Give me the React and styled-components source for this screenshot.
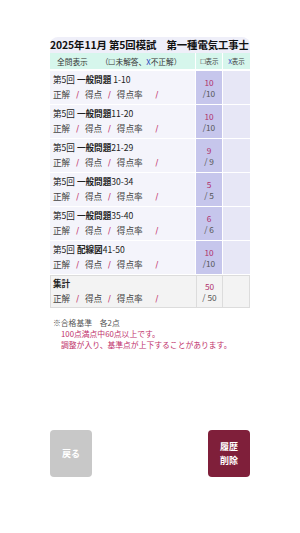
import React from "react";
import styled, { createGlobalStyle } from "styled-components";

const rows = [
    { cat: "一般問題", range: " 1-10", score: 10, max: 10 },
    { cat: "一般問題", range: "11-20", score: 10, max: 10 },
    { cat: "一般問題", range: "21-29", score: 9, max: 9 },
    { cat: "一般問題", range: "30-34", score: 5, max: 5 },
    { cat: "一般問題", range: "35-40", score: 6, max: 6 },
    { cat: "配線図", range: "41-50", score: 10, max: 10 },
];

function App() {
    return (
        <>
            <GlobalStyle />
            <StPage>
                <StTitle>2025年11月 第5回模試　第一種電気工事士</StTitle>
                <StHeader>
                    <StHeadMain>
                        <span>全問表示</span>
                        <span>
                            （☐未解答、<StBlue>X</StBlue>不正解）
                        </span>
                    </StHeadMain>
                    <StHeadSmall>☐表示</StHeadSmall>
                    <StHeadSmall>
                        <StBlue>X</StBlue>表示
                    </StHeadSmall>
                </StHeader>

                {rows.map((r, i) => (
                    <StRow key={i}>
                        <StMain>
                            <StLabel>
                                第5回 <b>{r.cat}</b>
                                {r.range}
                            </StLabel>
                            <Stats />
                        </StMain>
                        <StScore>
                            <StGot>{r.score}</StGot>
                            <StMax>
                                /{r.max < 10 ? " " : ""}
                                {r.max}
                            </StMax>
                        </StScore>
                        <StWrong />
                    </StRow>
                ))}

                <StRow total>
                    <StMain total>
                        <StLabel>
                            <b>集計</b>
                        </StLabel>
                        <Stats />
                    </StMain>
                    <StScore total>
                        <StGot>50</StGot>
                        <StMax>/ 50</StMax>
                    </StScore>
                    <StWrong total />
                </StRow>

                <StNotes>
                    <p>※合格基準　各2点</p>
                    <StPink>100点満点中60点以上です。</StPink>
                    <StPink>調整が入り、基準点が上下することがあります。</StPink>
                </StNotes>

                <StButtons>
                    <StButton>戻る</StButton>
                    <StButton danger>
                        履歴
                        <br />
                        削除
                    </StButton>
                </StButtons>
            </StPage>
        </>
    );
}

function Stats() {
    return (
        <StStats>
            <span>正解</span>
            <StSlash>/</StSlash>
            <span>得点</span>
            <StSlash>/</StSlash>
            <span>得点率</span>
            <StSlash wide>/</StSlash>
        </StStats>
    );
}

const GlobalStyle = createGlobalStyle`
    body {
        margin: 0;
        background: #fff;
        font-family: "Noto Sans CJK JP", "Noto Sans", sans-serif;
        color: #333;
    }
    p { margin: 0; }
`;

const StPage = styled.div`
    width: 200px;
    margin: 0 auto;
    padding-top: 37px;
`;

const StTitle = styled.div`
    height: 16px;
    line-height: 16px;
    background: #efeff9;
    border-radius: 8px 8px 0 0;
    font-size: 10.4px;
    font-weight: 700;
    color: #111;
    white-space: nowrap;
    letter-spacing: -0.1px;
`;

const StHeader = styled.div`
    display: grid;
    grid-template-columns: 1fr 26px 27px;
    column-gap: 1px;
    height: 16px;
    margin-bottom: 2px;
    background: #fff;
`;

const StHeadMain = styled.div`
    background: #d6f6ec;
    display: flex;
    align-items: center;
    gap: 13px;
    padding-left: 7px;
    font-size: 7.7px;
    color: #333;
`;

const StHeadSmall = styled.div`
    background: #d6f6ec;
    display: flex;
    align-items: center;
    justify-content: center;
    font-size: 6.5px;
    color: #444;
`;

const StBlue = styled.span`
    color: #1f3fc0;
`;

const StRow = styled.div`
    display: grid;
    grid-template-columns: 1fr 26px 27px;
    column-gap: ${(p) => (p.total ? "0" : "1px")};
    height: ${(p) => (p.total ? "33px" : "32px")};
    margin-bottom: 2px;
    margin-top: ${(p) => (p.total ? "1px" : "0")};
`;

const StMain = styled.div`
    background: ${(p) => (p.total ? "#f3f3f3" : "#f4f4fb")};
    border: ${(p) => (p.total ? "1px solid #dcdcdc" : "none")};
    padding: ${(p) => (p.total ? "0 2px" : "1px 3px")};
    font-size: 8.6px;
    line-height: 15px;
    color: #222;
    white-space: nowrap;
`;

const StLabel = styled.div`
    b {
        font-weight: 700;
    }
`;

const StStats = styled.div`
    color: #444;
    display: flex;
    align-items: baseline;
`;

const StSlash = styled.span`
    font-family: "DejaVu Sans", sans-serif;
    color: #c0306a;
    font-size: 8px;
    margin-left: ${(p) => (p.wide ? "13px" : "6px")};
    margin-right: 6px;
`;

const StScore = styled.div`
    background: ${(p) => (p.total ? "#f3f3f3" : "#c6c6ec")};
    border: ${(p) => (p.total ? "1px solid #dcdcdc" : "none")};
    border-left: none;
    display: flex;
    flex-direction: column;
    align-items: center;
    justify-content: center;
    font-size: 8.3px;
    line-height: 11px;
`;

const StGot = styled.span`
    color: #b0306c;
`;

const StMax = styled.span`
    color: #555;
    white-space: pre;
`;

const StWrong = styled.div`
    background: ${(p) => (p.total ? "#f3f3f3" : "#e7e7f6")};
    border: ${(p) => (p.total ? "1px solid #dcdcdc" : "none")};
    border-left: none;
`;

const StNotes = styled.div`
    margin-top: 9px;
    padding-left: 3px;
    font-size: 7.8px;
    line-height: 11px;
    color: #555;
`;

const StPink = styled.p`
    padding-left: 8px;
    color: #c0306a;
`;

const StButtons = styled.div`
    display: flex;
    justify-content: space-between;
    margin-top: 80px;
`;

const StButton = styled.button`
    width: 42px;
    height: 47px;
    border: none;
    border-radius: 4px;
    background: ${(p) => (p.danger ? "#7f1f3a" : "#c8c8c8")};
    color: #fff;
    font-family: inherit;
    font-size: 9px;
    font-weight: 700;
    line-height: 14px;
    padding: 0;
    cursor: pointer;
`;

export default App;
